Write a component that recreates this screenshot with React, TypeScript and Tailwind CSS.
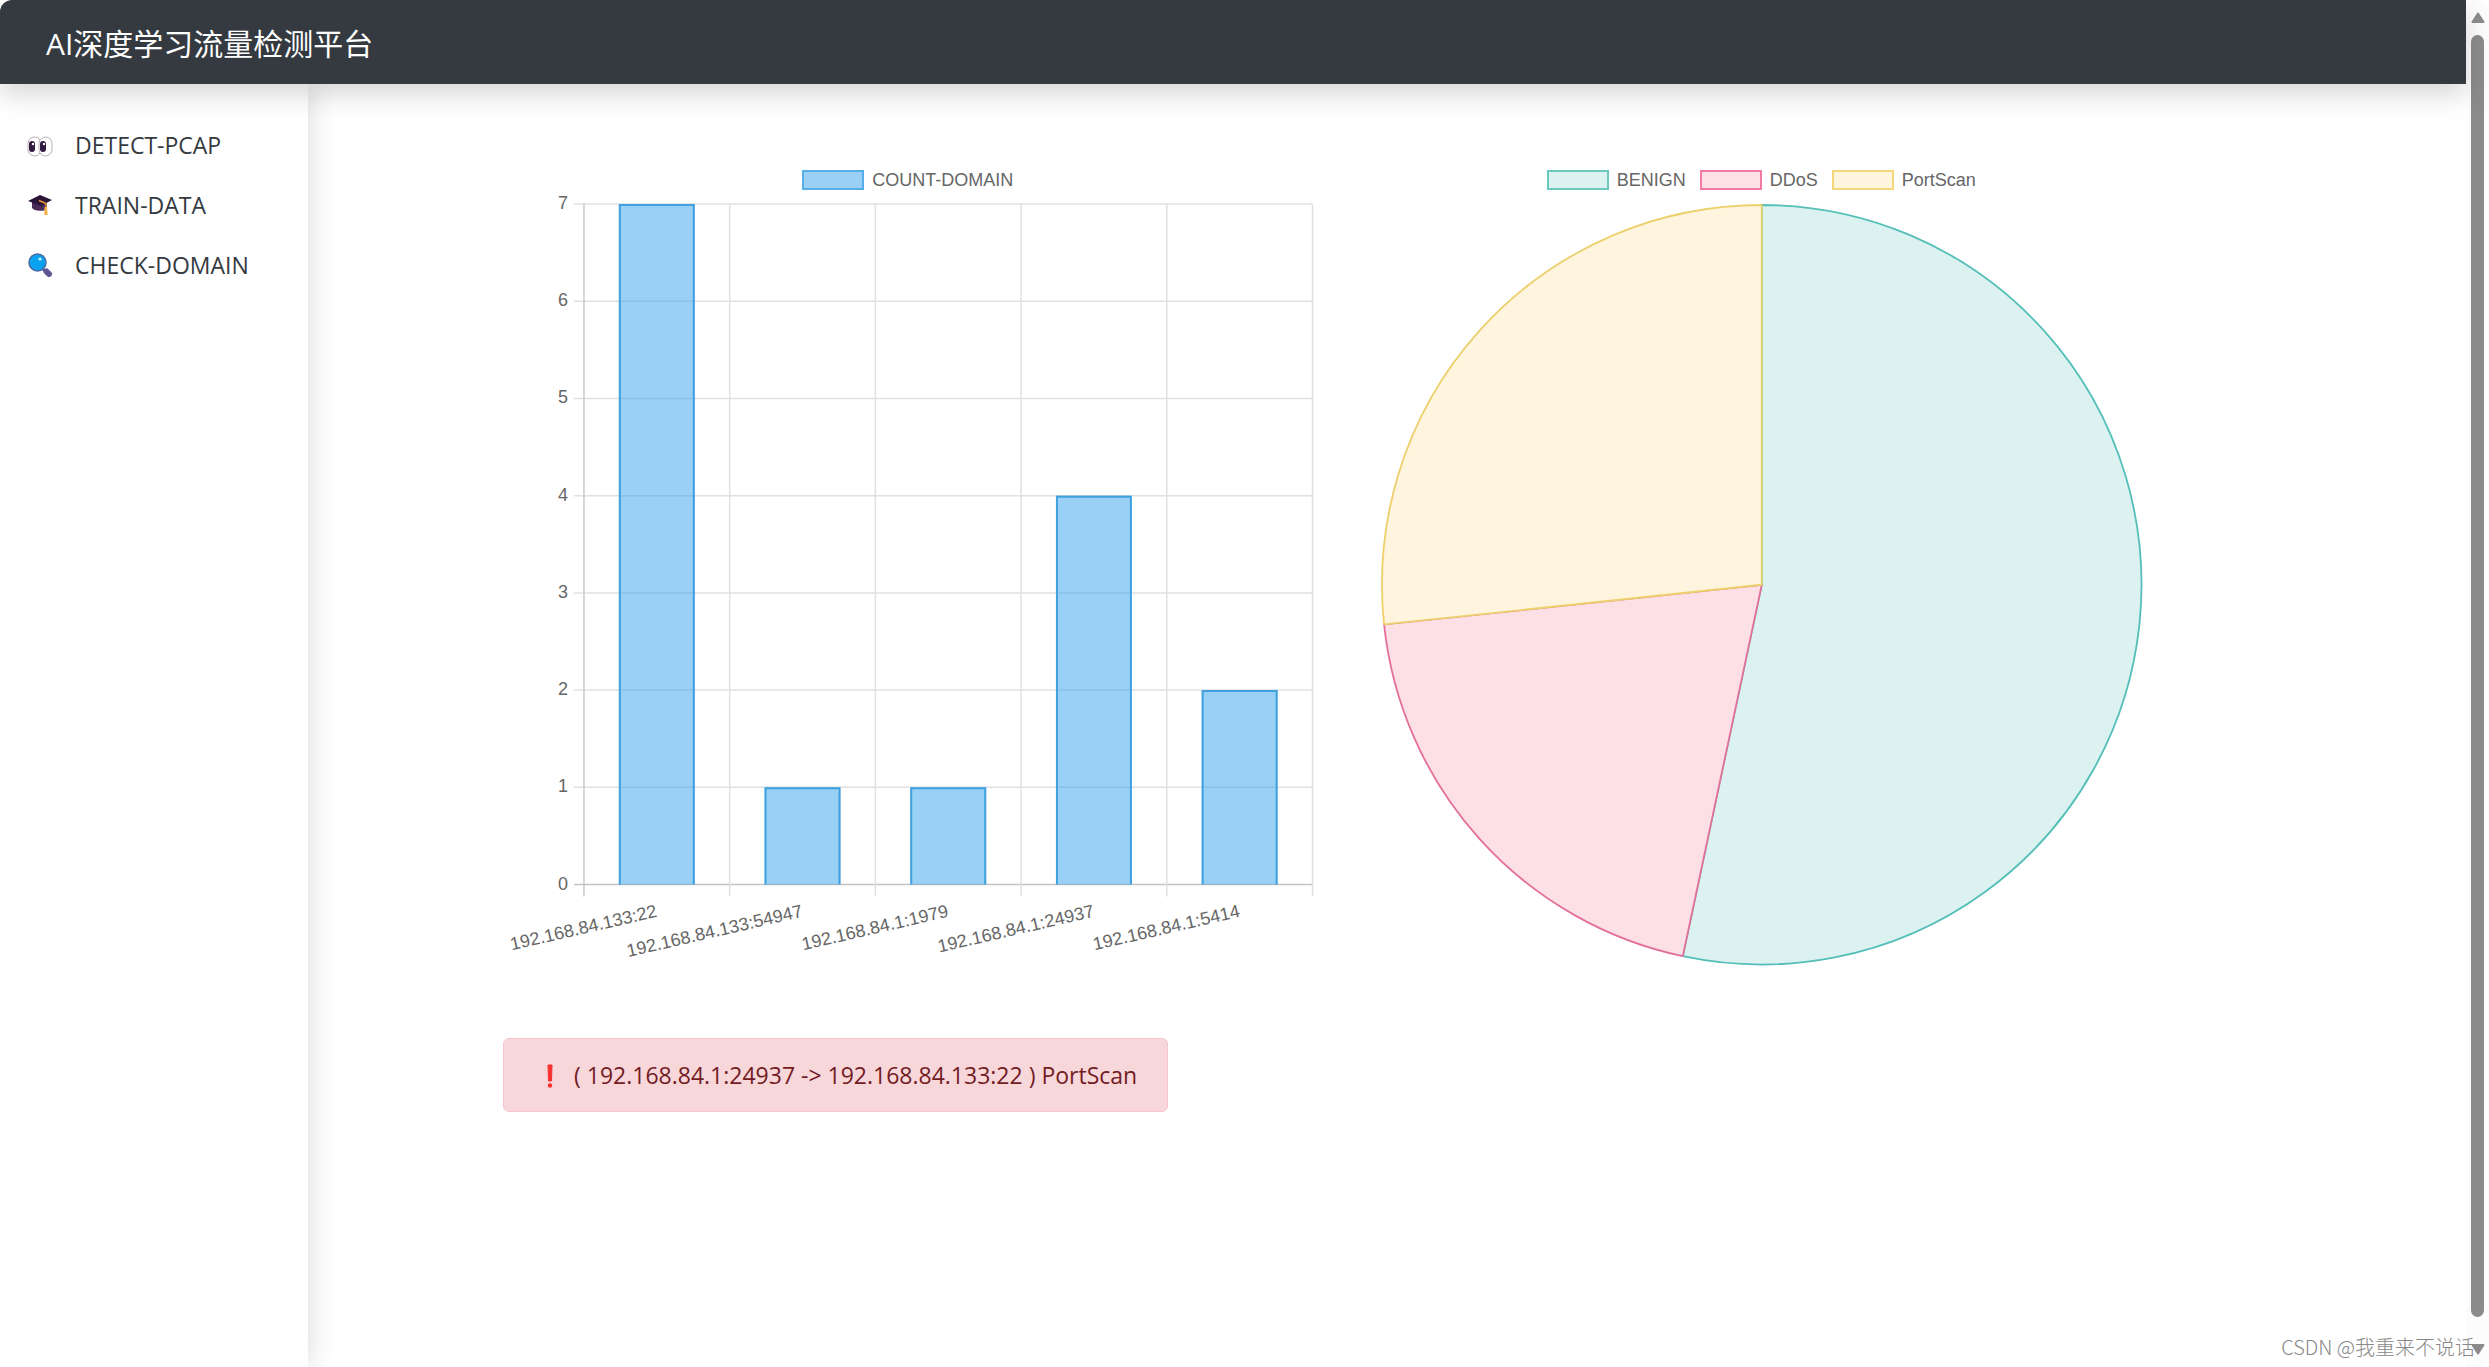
import type { ReactNode } from 'react'

interface NavItem {
  label: string
  icon: ReactNode
}

interface Slice {
  label: string
  value: number
  fill: string
  stroke: string
  swatch: string
}

const DOMAIN_COUNTS = [
  { label: '192.168.84.133:22', count: 7 },
  { label: '192.168.84.133:54947', count: 1 },
  { label: '192.168.84.1:1979', count: 1 },
  { label: '192.168.84.1:24937', count: 4 },
  { label: '192.168.84.1:5414', count: 2 },
]

const SLICES: Slice[] = [
  { label: 'BENIGN', value: 8, fill: '#dbf2f1', stroke: '#54bfb8', swatch: 'border-[#6cc9be] bg-[#dbf2f1]' },
  { label: 'DDoS', value: 3, fill: '#fde0e6', stroke: '#e3709a', swatch: 'border-[#f07ba4] bg-[#fde0e6]' },
  { label: 'PortScan', value: 4, fill: '#fff4dd', stroke: '#ecd06c', swatch: 'border-[#f5d67c] bg-[#fff4dd]' },
]

function EyesIcon() {
  return (
    <svg viewBox="0 0 26 24" className="h-6 w-[26px]" aria-hidden="true">
      <rect x="1" y="4" width="13" height="19" rx="6.5" fill="#fff" stroke="#b5b0ba" />
      <rect x="12" y="4" width="13" height="19" rx="6.5" fill="#fff" stroke="#b5b0ba" />
      <rect x="2" y="8" width="6" height="11" rx="3" fill="#321b41" />
      <rect x="13" y="8" width="6" height="11" rx="3" fill="#321b41" />
      <circle cx="6" cy="11" r="1.2" fill="#fff" />
      <circle cx="17" cy="11" r="1.2" fill="#fff" />
    </svg>
  )
}

function CapIcon() {
  return (
    <svg viewBox="0 0 26 24" className="h-6 w-[26px]" aria-hidden="true">
      <path d="M5 9v6c2 3 12 4 15 1V9z" fill="#4a2a57" />
      <path d="M1 8 13 2l12 5-11 6z" fill="#2b1537" />
      <path d="M12 7.5l7 3v5" fill="none" stroke="#e8953f" strokeWidth="1.5" />
      <path d="M17.5 14h2.5l.7 8h-3.4z" fill="#f4b04e" />
    </svg>
  )
}

function SearchIcon() {
  return (
    <svg viewBox="0 0 26 24" className="h-6 w-[26px]" aria-hidden="true">
      <path d="m15 15 4 4" stroke="#5c5591" strokeWidth="2.5" />
      <path d="m19.5 18.5 2.5 2.5" stroke="#5c5591" strokeWidth="6" strokeLinecap="round" />
      <circle cx="10.5" cy="9.5" r="8.5" fill="#0aa1ee" stroke="#4a68a3" strokeWidth="1.5" />
      <circle cx="13" cy="6" r="1.6" fill="#c9f0ff" />
    </svg>
  )
}

const NAV_ITEMS: NavItem[] = [
  { label: 'DETECT-PCAP', icon: <EyesIcon /> },
  { label: 'TRAIN-DATA', icon: <CapIcon /> },
  { label: 'CHECK-DOMAIN', icon: <SearchIcon /> },
]

function LegendItem({ label, swatch }: { label: string; swatch: string }) {
  return (
    <li className="flex items-center gap-2">
      <span className={`h-5 w-[62px] border-2 ${swatch}`} />
      <span className="pb-px text-lg leading-5 text-[#666]">{label}</span>
    </li>
  )
}

function BarChart() {
  const left = 81
  const top = 8
  const right = 810
  const bottom = 689
  const max = 7
  const step = (right - left) / DOMAIN_COUNTS.length
  const toY = (value: number) => bottom - ((bottom - top) * value) / max

  return (
    <figure>
      <ul className="flex h-8 items-center justify-center">
        <LegendItem label="COUNT-DOMAIN" swatch="border-[#58aeea] bg-[#9ad0f5]" />
      </ul>
      <svg viewBox="0 0 810 772" className="w-full overflow-visible text-lg" fill="#666">
        {Array.from({ length: max + 1 }, (_, value) => (
          <g key={value}>
            <line
              x1={left - 10}
              x2={right}
              y1={toY(value)}
              y2={toY(value)}
              stroke={value === 0 ? '#c4c4c4' : '#e0e0e0'}
              strokeWidth="1.5"
            />
            <text x={left - 16} y={toY(value) + 5} textAnchor="end">
              {value}
            </text>
          </g>
        ))}
        {Array.from({ length: DOMAIN_COUNTS.length + 1 }, (_, i) => (
          <line
            key={i}
            x1={left + step * i}
            x2={left + step * i}
            y1={top}
            y2={bottom + 12}
            stroke={i === 0 ? '#c9c9c9' : '#e0e0e0'}
            strokeWidth="1.5"
          />
        ))}
        {DOMAIN_COUNTS.map(({ label, count }, i) => {
          const center = left + step * (i + 0.5)
          const y = toY(count)
          return (
            <g key={label}>
              <rect x={center - 38} y={y} width="76" height={bottom - y} fill="#36a2eb" fillOpacity="0.5" />
              <path
                d={`M${center - 37} ${bottom}V${y + 1}H${center + 37}V${bottom}`}
                fill="none"
                stroke="#3fa2df"
                strokeWidth="2"
              />
              <text textAnchor="end" transform={`translate(${center + 1} ${bottom + 32}) rotate(-13)`}>
                {label}
              </text>
            </g>
          )
        })}
      </svg>
    </figure>
  )
}

function PieChart() {
  const cx = 405
  const cy = 389
  const r = 380
  const total = SLICES.reduce((sum, slice) => sum + slice.value, 0)
  const pointAt = (value: number) => {
    const angle = (value / total) * Math.PI * 2
    return `${cx + r * Math.sin(angle)} ${cy - r * Math.cos(angle)}`
  }

  return (
    <figure>
      <ul className="flex h-8 items-center justify-center gap-[14px]">
        {SLICES.map((slice) => (
          <LegendItem key={slice.label} label={slice.label} swatch={slice.swatch} />
        ))}
      </ul>
      <svg viewBox="0 0 810 772" className="w-full overflow-visible">
        {SLICES.map((slice, i) => {
          const start = SLICES.slice(0, i).reduce((sum, s) => sum + s.value, 0)
          const end = start + slice.value
          const largeArc = slice.value / total > 0.5 ? 1 : 0
          return (
            <path
              key={slice.label}
              d={`M${cx} ${cy}L${pointAt(start)}A${r} ${r} 0 ${largeArc} 1 ${pointAt(end)}Z`}
              fill={slice.fill}
              stroke={slice.stroke}
              strokeWidth="1.8"
              strokeLinejoin="bevel"
            />
          )
        })}
      </svg>
    </figure>
  )
}

function Scrollbar() {
  return (
    <div className="flex w-[23px] shrink-0 flex-col items-center gap-3 bg-[#fcfcfc] py-3" aria-hidden="true">
      <svg viewBox="0 0 14 11" className="h-[11px] w-[14px]">
        <path d="M7 1.5 12.5 10h-11z" fill="#8b8b8b" stroke="#8b8b8b" strokeWidth="2" strokeLinejoin="round" />
      </svg>
      <div className="mb-[15px] w-[13px] flex-1 rounded-full bg-[#8b8b8b]" />
      <svg viewBox="0 0 14 11" className="h-[11px] w-[14px]">
        <path d="M7 9.5 12.5 1h-11z" fill="#8b8b8b" stroke="#8b8b8b" strokeWidth="2" strokeLinejoin="round" />
      </svg>
    </div>
  )
}

export default function App() {
  return (
    <div className="relative flex min-h-screen overflow-hidden rounded-xl bg-white font-['Open_Sans','Noto_Sans_CJK_SC',sans-serif] text-[#343a40]">
      <div className="flex min-w-0 flex-1 flex-col">
        <header className="z-10 flex h-[84px] items-center bg-[#343a40] px-[46px] pt-[3px] shadow-[0_12px_24px_rgba(0,0,0,0.15)]">
          <h1 className="text-[30px] leading-10 text-white">AI深度学习流量检测平台</h1>
        </header>

        <div className="flex flex-1">
          <nav className="w-[308px] shrink-0 pt-[31px] shadow-[4px_0_24px_rgba(0,0,0,0.12)]">
            <ul>
              {NAV_ITEMS.map((item) => (
                <li key={item.label}>
                  <a href="#" className="flex h-[60px] items-center gap-[22px] pl-[27px] text-[23px] text-[#343a40]">
                    {item.icon}
                    {item.label}
                  </a>
                </li>
              ))}
            </ul>
          </nav>

          <main className="min-w-0 flex-1 pt-20 pr-[300px] pl-[195px]">
            <div className="grid grid-cols-2 gap-11 font-['Liberation_Sans',sans-serif]">
              <BarChart />
              <PieChart />
            </div>

            <div
              role="alert"
              className="mt-[70px] flex h-[74px] w-fit items-center gap-5 rounded-md border border-[#f5c6cb] bg-[#f8d7da] pt-[2px] pr-[30px] pl-[42px] text-[23px] text-[#721c24]"
            >
              <svg viewBox="0 0 8 24" className="h-6 w-2" aria-hidden="true">
                <path d="M2 1h4l-.5 16h-3z" fill="#f8312f" stroke="#f8312f" strokeLinejoin="round" />
                <circle cx="4" cy="21.5" r="2.2" fill="#f8312f" />
              </svg>
              <span>( 192.168.84.1:24937 -&gt; 192.168.84.133:22 ) PortScan</span>
            </div>
          </main>
        </div>
      </div>

      <Scrollbar />

      <p className="absolute right-[14px] bottom-1 font-['Noto_Sans_CJK_SC',sans-serif] text-xl leading-8 font-light text-[#888]">
        CSDN @我重来不说话
      </p>
    </div>
  )
}
